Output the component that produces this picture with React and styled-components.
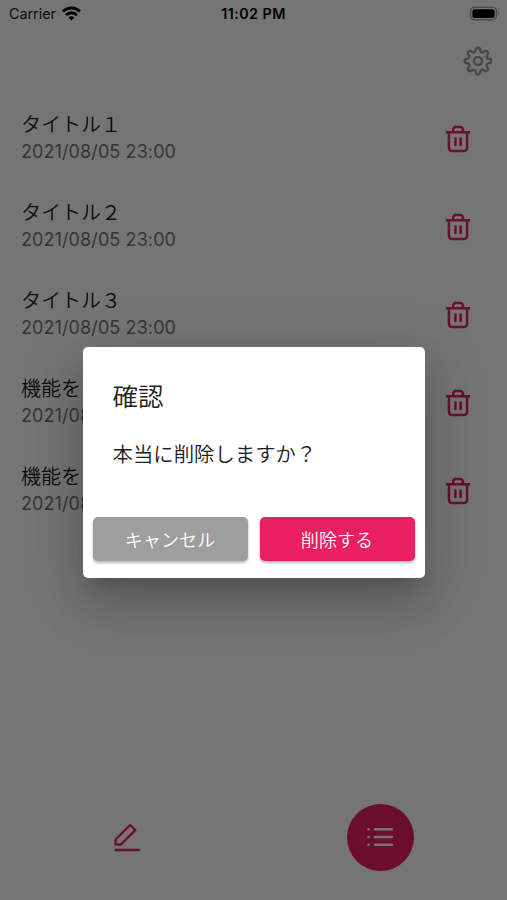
import React from "react";
import styled, { createGlobalStyle } from "styled-components";

const sans = `Inter, "Noto Sans CJK JP", sans-serif`;
const pink = "#e91e63";

const Global = createGlobalStyle`
  * { box-sizing: border-box; }
  body { margin: 0; background: #fff; font-family: ${sans}; overflow: hidden; }
`;

const Screen = styled.div`
  position: relative;
  width: 507px;
  height: 900px;
  display: flex;
  flex-direction: column;
  background: #fff;
`;

const StatusBar = styled.header`
  height: 27px;
  display: grid;
  grid-template-columns: 1fr auto 1fr;
  align-items: center;
  padding: 0 7px 0 9px;
  font-size: 14.3px;
  color: #222;
`;

const Carrier = styled.div`
  display: flex;
  align-items: center;
  gap: 6px;
`;

const Clock = styled.div`
  font-weight: 600;
  font-size: 14.3px;
  letter-spacing: 0.45px;
  margin-right: 2px;
  color: #000;
`;

const Battery = styled.svg`
  justify-self: end;
  display: block;
`;

const Toolbar = styled.div`
  height: 67px;
  padding: 19px 14px 0 0;
  display: flex;
  justify-content: flex-end;
  align-items: flex-start;
`;

const IconButton = styled.button`
  display: flex;
  padding: 0;
  border: 0;
  background: none;
  color: ${(p) => p.$color};
`;

const List = styled.ul`
  flex: 1;
  margin: 0;
  padding: 0;
  list-style: none;
`;

const Row = styled.li`
  height: 88px;
  padding: 1px 35px 0 21px;
  display: flex;
  align-items: center;
  justify-content: space-between;
`;

const RowText = styled.div`
  padding-bottom: 2px;
`;

const RowTitle = styled.div`
  font-size: 20px;
  font-weight: 350;
  line-height: 28px;
  color: #212121;
  white-space: nowrap;
`;

const RowDate = styled.div`
  font-size: 18px;
  line-height: 26px;
  letter-spacing: 0.1px;
  color: #757575;
  white-space: nowrap;
`;

const BottomNav = styled.nav`
  height: 126px;
  display: grid;
  grid-template-columns: 1fr 1fr;
  justify-items: center;
  align-items: center;
`;

const NavItem = styled.div`
  width: 67px;
  height: 67px;
  border-radius: 50%;
  display: flex;
  align-items: center;
  justify-content: center;
  color: ${(p) => (p.$active ? "#fff" : pink)};
  background: ${(p) => (p.$active ? pink : "transparent")};
`;

const Scrim = styled.div`
  position: absolute;
  inset: 0;
  display: flex;
  justify-content: center;
  align-items: flex-start;
  padding-top: 347px;
  background: rgba(0, 0, 0, 0.54);
`;

const Dialog = styled.section`
  width: 342px;
  height: 231px;
  padding: 32px 10px 17px;
  display: flex;
  flex-direction: column;
  border-radius: 5px;
  background: #fff;
  box-shadow: 0 14px 19px -9px rgba(0, 0, 0, 0.2), 0 30px 48px 4px rgba(0, 0, 0, 0.12),
    0 11px 58px 10px rgba(0, 0, 0, 0.1);
`;

const DialogTitle = styled.h2`
  margin: 0;
  padding-left: 20px;
  font-size: 25.5px;
  line-height: 36px;
  font-weight: 350;
  color: #212121;
`;

const DialogText = styled.p`
  margin: 25px 0 0;
  padding-left: 20px;
  font-size: 20.4px;
  font-weight: 350;
  line-height: 30px;
  color: #212121;
`;

const Actions = styled.div`
  margin-top: auto;
  display: grid;
  grid-template-columns: 1fr 1fr;
  gap: 12px;
`;

const ActionButton = styled.button`
  height: 44px;
  padding: 0 0 1px;
  border: 0;
  border-radius: 5px;
  font-family: ${sans};
  font-size: 18.1px;
  font-weight: 350;
  color: #fff;
  background: ${(p) => (p.$danger ? pink : "#9e9e9e")};
  box-shadow: 0 2px 3px rgba(0, 0, 0, 0.28);
`;

const Wifi = () => (
  <svg width="19" height="15" viewBox="0 0 19 15" fill="none" stroke="#000" strokeWidth="2.8">
    <path d="M1 5.6C5.8.8 13.2.8 18 5.6" />
    <path d="M4 9c3.1-3 7.9-3 11 0" />
    <path d="M6.6 11.6a4.3 4.3 0 0 1 5.8 0L9.5 14.5z" fill="#000" stroke="none" />
  </svg>
);

const gearPath = (() => {
  const points = [];
  for (let i = 0; i <= 160; i++) {
    const a = (i / 160) * Math.PI * 2;
    const c = Math.cos(8 * a);
    const r = 11.4 + 2 * Math.tanh(1.8 * c);
    points.push(`${(15 + r * Math.cos(a)).toFixed(2)} ${(15 + r * Math.sin(a)).toFixed(2)}`);
  }
  return `M${points.join("L")}Z`;
})();

const Gear = () => (
  <svg width="30" height="30" viewBox="0 0 30 30" fill="none" stroke="currentColor" strokeWidth="2.4" strokeLinejoin="round">
    <path d={gearPath} />
    <circle cx="15" cy="15" r="4" />
  </svg>
);

const Trash = () => (
  <svg width="28" height="30" viewBox="0 0 28 30" fill="none" stroke="currentColor" strokeWidth="2.5" strokeLinecap="round" strokeLinejoin="round">
    <path d="M3 8.2h22M4.9 8.2v15.9a3 3 0 0 0 3 3h12.2a3 3 0 0 0 3-3V8.2M9.2 8V5.5a2.6 2.6 0 0 1 2.6-2.6h4.4a2.6 2.6 0 0 1 2.6 2.6V8" />
    <path d="M11.4 14.4v6.6M16.6 14.4v6.6" />
  </svg>
);

const Pencil = () => (
  <svg width="28" height="30" viewBox="0 0 28 30" fill="none" stroke="currentColor" strokeWidth="2.4" strokeLinecap="round" strokeLinejoin="round">
    <path d="M2.6 17.5 17.1 3l5.2 5.2L8 22.5H2.6z" />
    <path d="M2.6 28h23.5" />
  </svg>
);

const ListIcon = () => (
  <svg width="28" height="22" viewBox="0 0 28 22" fill="none" stroke="currentColor" strokeWidth="2.5" strokeLinecap="round">
    <path d="M9 3.3h17M9 11h17M9 18.7h17M2.5 3.3h.1M2.5 11h.1M2.5 18.7h.1" />
  </svg>
);

const items = ["タイトル１", "タイトル２", "タイトル３", "機能を", "機能を"];

export default function App() {
  return (
    <>
      <Global />
      <Screen>
        <StatusBar>
          <Carrier>Carrier <Wifi /></Carrier>
          <Clock>11:02 PM</Clock>
          <Battery width="31" height="15" viewBox="0 0 31 15">
            <rect x="1.6" y="1.4" width="25.8" height="12.4" rx="3.5" fill="none" stroke="#a0a0a0" strokeWidth="1.4" />
            <rect x="3.4" y="3.2" width="22.2" height="8.8" rx="1.8" fill="#000" />
            <path d="M28.8 5.3v4.6q2-2.3 0-4.6" fill="#a0a0a0" />
          </Battery>
        </StatusBar>
        <Toolbar>
          <IconButton $color="#9e9e9e" aria-label="設定"><Gear /></IconButton>
        </Toolbar>
        <List>
          {items.map((title, i) => (
            <Row key={i}>
              <RowText>
                <RowTitle>{title}</RowTitle>
                <RowDate>2021/08/05 23:00</RowDate>
              </RowText>
              <IconButton $color={pink} aria-label="削除"><Trash /></IconButton>
            </Row>
          ))}
        </List>
        <BottomNav>
          <NavItem><Pencil /></NavItem>
          <NavItem $active><ListIcon /></NavItem>
        </BottomNav>
        <Scrim>
          <Dialog role="dialog">
            <DialogTitle>確認</DialogTitle>
            <DialogText>本当に削除しますか？</DialogText>
            <Actions>
              <ActionButton>キャンセル</ActionButton>
              <ActionButton $danger>削除する</ActionButton>
            </Actions>
          </Dialog>
        </Scrim>
      </Screen>
    </>
  );
}
